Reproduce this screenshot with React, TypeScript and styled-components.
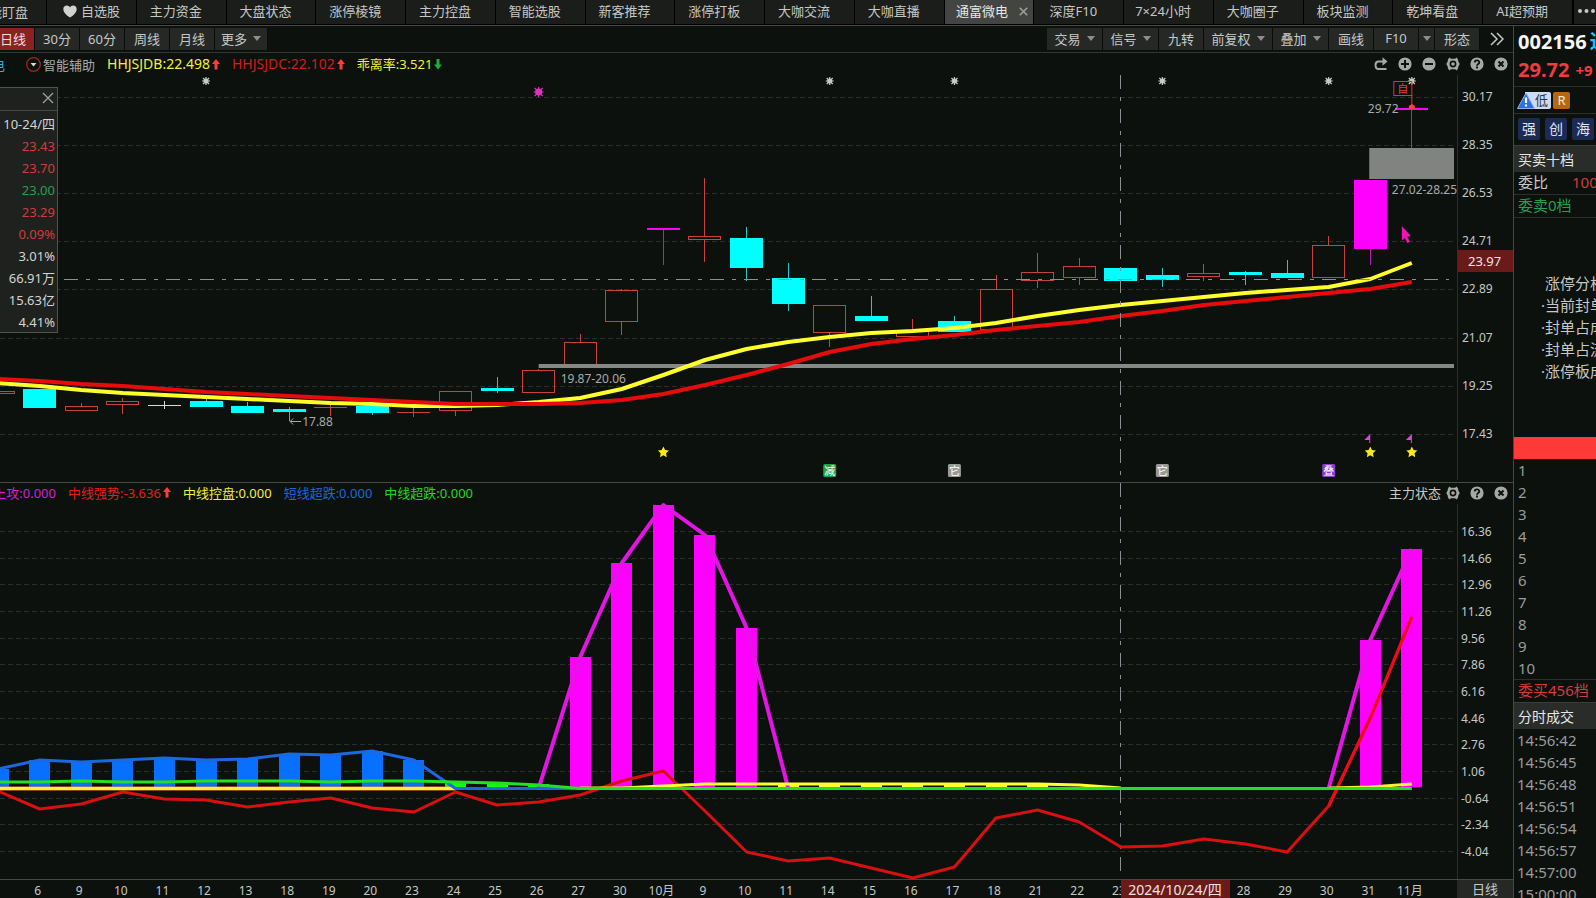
import React, { useEffect, useRef, useState } from "react";
import styled, { createGlobalStyle, css } from "styled-components";

const c = {
  bg: "#0c110e",
  panel: "#262826",
  line: "#474947",
  faint: "#2c2f2c",
  text: "#c6c8c6",
  bright: "#e6e8e6",
  dim: "#9a9c9a",
  red: "#d23c3c",
  green: "#23a04e",
  cyan: "#00ffff",
  magenta: "#ff00ff",
  yellow: "#ffff2e",
  tag: "#6b1a1a",
};

const FONT = '"Noto Sans", "Noto Sans CJK SC", sans-serif';

const GlobalStyle = createGlobalStyle`
  * { box-sizing: border-box; }
  html, body { margin: 0; background: ${c.bg}; overflow: hidden; }
  body { font-family: ${FONT}; font-size: 13px; color: ${c.text}; }
  button { font: inherit; color: inherit; background: none; border: 0; padding: 0; margin: 0; cursor: pointer; }
  svg { display: block; flex: none; }
`;

const Page = styled.div`
  display: flex;
  flex-direction: column;
  height: 100vh;
  overflow: hidden;
`;

/* ---------- tab bar ---------- */

const TabBar = styled.nav`
  display: flex;
  flex: none;
  height: 26px;
  padding-bottom: 1px;
  background: #000;
  border-bottom: 1px solid ${c.line};
`;

const TabItem = styled.div<{ $active?: boolean }>`
  display: flex;
  flex: 1 1 0;
  min-width: 0;
  border-right: 1px solid #000;
  background: ${(p) => (p.$active ? "#434543" : "#1b1d1b")};
  color: ${(p) => (p.$active ? c.bright : c.text)};
`;

const TabButton = styled.button<{ $wide?: boolean }>`
  display: flex;
  flex: 1;
  align-items: center;
  justify-content: center;
  gap: 4px;
  white-space: nowrap;
  line-height: 22px;
  padding: 0 ${(p) => (p.$wide ? 0 : 11)}px 2px 0;
`;

const EdgeTab = styled.button`
  display: flex;
  flex: none;
  justify-content: flex-end;
  align-items: center;
  width: 47px;
  padding: 0 18px 2px 0;
  overflow: hidden;
  white-space: nowrap;
  border-right: 1px solid #000;
  background: #1b1d1b;
`;

const TabClose = styled.button`
  display: flex;
  align-items: center;
  padding: 0 5px 2px 0;
  color: #a0a2a0;
`;

const MoreTabs = styled.button`
  display: flex;
  flex: none;
  align-items: center;
  justify-content: flex-end;
  width: 23px;
  padding-bottom: 3px;
  background: #1b1d1b;
  border-left: 1px solid #000;
`;

/* ---------- frame ---------- */

const Body = styled.div`
  display: flex;
  flex: 1;
  min-height: 0;
`;

const Main = styled.main`
  flex: 1;
  min-width: 0;
  position: relative;
`;

const Toolbar = styled.div`
  display: flex;
  align-items: center;
  height: 27px;
  border-bottom: 1px solid #343634;
  padding-right: 4px;
`;

const ToolButton = styled.button<{ $w?: number }>`
  display: flex;
  align-items: center;
  justify-content: center;
  gap: 6px;
  height: 22px;
  width: ${(p) => p.$w ?? 45}px;
  padding-bottom: 2px;
  border-right: 1px solid #0a0c0a;
  background: ${c.panel};
  color: ${c.text};
  white-space: nowrap;
`;

const CurrentPeriod = styled(ToolButton)`
  padding-right: 8px;
  background: #8a2222;
  color: #f0dede;
`;

const Spacer = styled.div`
  flex: 1;
`;

const IconButton = styled.button`
  display: flex;
  align-items: center;
  justify-content: center;
  width: 24px;
  height: 20px;
  color: #a6a8a6;
`;

const ExpandButton = styled(IconButton)`
  margin-left: 5px;
`;

const legendRow = css`
  display: flex;
  align-items: center;
  white-space: nowrap;
`;

const Legend = styled.div`
  ${legendRow}
  height: 22px;
`;

const OverlayLegend = styled.div`
  ${legendRow}
  position: absolute;
  top: 0;
  left: 0;
  right: 0;
  height: 19px;
`;

const ClippedName = styled.span<{ $w: number; $color: string }>`
  display: flex;
  flex: none;
  justify-content: flex-end;
  width: ${(p) => p.$w}px;
  overflow: hidden;
  color: ${(p) => p.$color};
`;

const Assist = styled.button`
  display: flex;
  align-items: center;
  gap: 2px;
  margin-left: 21px;
  color: #a8aaa8;
`;

const Series = styled.span<{ $color: string; $size?: number }>`
  display: flex;
  align-items: center;
  gap: 2px;
  margin-left: 12px;
  font-size: ${(p) => p.$size ?? 13}px;
  line-height: 18px;
  color: ${(p) => p.$color};
`;

const Pane = styled.section`
  position: relative;
  border-bottom: 1px solid ${c.line};
`;

const DateRow = styled.div`
  display: flex;
  height: 18px;
`;

const PeriodButton = styled.button`
  flex: none;
  width: 56px;
  height: 18px;
  line-height: 18px;
  background: ${c.panel};
`;

/* ---------- floating quote box ---------- */

const QuoteBox = styled.aside`
  position: absolute;
  top: 61px;
  left: 0;
  width: 58px;
  height: 246px;
  overflow: hidden;
  border: 1px solid #515351;
  border-left: 0;
  background: #1f211f;
`;

const QuoteHead = styled.div`
  display: flex;
  justify-content: flex-end;
  align-items: center;
  height: 23px;
  padding: 0 3px 2px 0;
  border-bottom: 1px solid #454745;
`;

const QuoteList = styled.ul`
  list-style: none;
  margin: 0;
  padding: 2px 2px 0 0;
`;

const QuoteItem = styled.li<{ $color?: string }>`
  display: flex;
  justify-content: flex-end;
  height: 22px;
  line-height: 22px;
  font-size: 13px;
  white-space: nowrap;
  color: ${(p) => p.$color ?? "#d4d6d4"};
`;

/* ---------- side bar ---------- */

const Side = styled.aside`
  flex: none;
  width: 83px;
  overflow: hidden;
  border-left: 1px solid ${c.line};
  white-space: nowrap;
  font-size: 15px;
`;

const StockHead = styled.header`
  height: 61px;
  padding: 2px 0 0 4px;
  font-size: 20px;
  font-weight: 700;
  line-height: 28px;
  border-bottom: 1px solid ${c.faint};
`;

const Code = styled.div`
  display: flex;
  gap: 3px;
  color: #f4f6f4;
  span { color: #1fc4f0; }
`;

const Price = styled.div`
  display: flex;
  gap: 6px;
  color: #f03c3c;
  span { font-size: 15px; }
`;

const BadgeRow = styled.div`
  display: flex;
  align-items: center;
  gap: 2px;
  height: 27px;
  padding-left: 3px;
  border-bottom: 1px solid ${c.faint};
`;

const RiskBadge = styled.span`
  display: flex;
  align-items: center;
  width: 34px;
  height: 17px;
  border-radius: 2px;
  background: linear-gradient(90deg, transparent 8px, #cddcf5 8px);
  color: #30343a;
  font-size: 13px;
  line-height: 17px;
`;

const RBadge = styled.span`
  width: 17px;
  height: 17px;
  border-radius: 2px;
  background: #b4690e;
  color: #f4e8d8;
  font-size: 13px;
  line-height: 17px;
  text-align: center;
`;

const TagRow = styled.div`
  display: flex;
  align-items: center;
  gap: 5px;
  height: 31px;
  padding: 0 0 1px 4px;
`;

const TagButton = styled.button`
  flex: none;
  width: 22px;
  height: 22px;
  border-radius: 2px;
  background: #1c2b56;
  color: #e0e4ee;
  font-size: 14px;
  line-height: 20px;
`;

const SideHeading = styled.h2`
  margin: 0;
  height: 27px;
  padding: 2px 0 0 4px;
  background: #2a2c2a;
  border-top: 1px solid #3c3e3c;
  color: ${c.bright};
  font-size: 14px;
  font-weight: 400;
  line-height: 24px;
`;

const SideRow = styled.div<{ $color?: string }>`
  display: flex;
  gap: 24px;
  height: 23px;
  padding-left: 4px;
  line-height: 20px;
  border-bottom: 1px solid ${c.faint};
  color: ${(p) => p.$color ?? c.text};
`;

const Red = styled.span`
  color: ${c.red};
`;

const Analysis = styled.ul`
  list-style: none;
  margin: 0;
  height: 219px;
  padding: 54px 0 0 27px;
  li { height: 22px; line-height: 22px; }
  li:first-child { padding-left: 4px; }
`;

const RedBar = styled.div`
  height: 22px;
  background: #ff3838;
`;

const Lines = styled.ol`
  list-style: none;
  margin: 0;
  padding: 0 0 0 4px;
  color: ${c.dim};
  li { height: 22px; line-height: 22px; }
`;

const BuyRow = styled(SideRow)`
  border-top: 1px solid ${c.faint};
  border-bottom: 0;
`;

const Times = styled(Lines)`
  padding-left: 3px;
`;

/* ---------- icons ---------- */

const Caret = () => (
  <svg width="8" height="5" viewBox="0 0 8 5"><path d="M0 0h8L4 5z" fill="#8c8e8c" /></svg>
);
const Cross = ({ size, w = 1.3 }: { size: number; w?: number }) => (
  <svg width={size} height={size} viewBox="0 0 12 12"><path d="M1 1l10 10M11 1L1 11" stroke="#a0a2a0" strokeWidth={w} fill="none" /></svg>
);
const Heart = () => (
  <svg width="14" height="13" viewBox="0 0 14 13"><path d="M7 12.5C3 10 0.3 7.3 0.3 4.2 0.3 2 1.9 0.6 3.8 0.6 5.2 0.6 6.3 1.3 7 2.5 7.7 1.3 8.8 0.6 10.2 0.6 12.1 0.6 13.7 2 13.7 4.2 13.7 7.3 11 10 7 12.5z" fill="#d0d2d0" /></svg>
);
const Disc = ({ children }: { children: React.ReactNode }) => (
  <svg width="14" height="14" viewBox="0 0 14 14">
    <circle cx="7" cy="7" r="6.6" fill="#a6a8a6" />
    <g stroke={c.bg} strokeWidth="2" fill="none">{children}</g>
  </svg>
);
const PlusIcon = () => <Disc><path d="M7 3v8M3 7h8" /></Disc>;
const MinusIcon = () => <Disc><path d="M3 7h8" /></Disc>;
const CloseIcon = () => <Disc><path d="M4.5 4.5l5 5M9.5 4.5l-5 5" /></Disc>;
const HelpIcon = () => (
  <Disc>
    <path d="M4.7 5.6C4.7 2.7 9.3 2.7 9.3 5.4 9.3 7 7 6.9 7 8.7" strokeWidth="1.8" />
    <path d="M7 9.6v1.9" strokeWidth="1.9" />
  </Disc>
);
const GearIcon = () => (
  <svg width="14" height="14" viewBox="0 0 14 14">
    <path fill="#a6a8a6" fillRule="evenodd" d="M3.2.4L5 1.700H9L10.800.4 12.200 3V4.300L13.700 7 12.200 9.700V11L10.800 13.600 9 12.300H5L3.200 13.600 1.800 11V9.700L.3 7 1.800 4.300V3zM7 3.600a3.400 3.400 0 100 6.800 3.400 3.400 0 000-6.800zM7 5.200a1.800 1.800 0 110 3.600 1.800 1.800 0 010-3.600z" />
  </svg>
);
const RedoIcon = () => (
  <svg width="14" height="14" viewBox="0 0 14 14">
    <path d="M10 4.500H4.500Q1.500 4.500 1.500 8 1.500 12 4.500 12H12.500" fill="none" stroke="#a6a8a6" strokeWidth="2" />
    <path d="M8.500 0.300l5 4.200-5 4.200z" fill="#a6a8a6" />
  </svg>
);
const UpArrow = () => (
  <svg width="8" height="11" viewBox="0 0 8 11"><path d="M4 0L8 5H5.500v5.500h-3V5H0z" fill="#ff3c3c" /></svg>
);
const DownArrow = () => (
  <svg width="8" height="11" viewBox="0 0 8 11"><path d="M4 10.500L8 5.500H5.500V0h-3v5.500H0z" fill="#1fae3c" /></svg>
);
const AssistIcon = () => (
  <svg width="15" height="15" viewBox="0 0 15 15">
    <circle cx="7.5" cy="7.5" r="6.8" fill="none" stroke="#9c2424" strokeWidth="1.3" />
    <path d="M4.500 6h6l-3 3.500z" fill="#d8dad8" />
  </svg>
);
const Chevrons = () => (
  <svg width="14" height="14" viewBox="0 0 14 14"><path d="M1 1l6 6-6 6M7 1l6 6-6 6" fill="none" stroke="#c6c8c6" strokeWidth="1.5" /></svg>
);
const Dots = () => (
  <svg width="19" height="6" viewBox="0 0 19 6"><g fill="#c6c8c6"><circle cx="3" cy="3" r="2" /><circle cx="9.5" cy="3" r="2" /><circle cx="16" cy="3" r="2" /></g></svg>
);
const WarnIcon = () => (
  <svg width="18" height="17" viewBox="0 0 18 17">
    <path d="M9 1L17.500 16.500H.5z" fill="#2f6fe0" stroke="#8db4f4" />
    <path d="M9 5.500v5.500M9 12.500v2" stroke="#fff" strokeWidth="2.2" />
  </svg>
);

/* ---------- chart data ---------- */

type Kind = "up" | "down" | "limit" | "flat";
// slot, kind, body top, body bottom, wick top, wick bottom
type Candle = [number, Kind, number, number, number, number];

const candles: Candle[] = [
  [-1, "up", 391, 394, 391, 394],
  [0, "down", 389, 408, 389, 408],
  [1, "up", 406, 411, 403, 411],
  [2, "up", 401, 405, 398, 414],
  [3, "flat", 405, 405, 401, 409],
  [4, "down", 401, 407, 398, 407],
  [5, "down", 406, 413, 402, 413],
  [6, "down", 409, 412, 407, 421],
  [7, "up", 407, 407, 404, 416],
  [8, "down", 406, 413, 406, 415],
  [9, "up", 412, 412, 407, 417],
  [10, "up", 391, 411, 391, 416],
  [11, "down", 388, 391, 377, 393],
  [12, "up", 370, 393, 369, 393],
  [13, "up", 342, 365, 334, 365],
  [14, "up", 290, 322, 289, 335],
  [15, "limit", 228, 230, 228, 265],
  [16, "up", 236, 240, 178, 262],
  [17, "down", 238, 268, 227, 281],
  [18, "down", 278, 304, 263, 311],
  [19, "up", 305, 333, 305, 347],
  [20, "down", 316, 321, 296, 321],
  [21, "up", 330, 337, 319, 337],
  [22, "down", 321, 332, 316, 332],
  [23, "up", 289, 330, 275, 330],
  [24, "up", 272, 281, 253, 288],
  [25, "up", 266, 278, 258, 285],
  [26, "down", 268, 281, 267, 281],
  [27, "down", 275, 280, 268, 287],
  [28, "up", 273, 277, 264, 281],
  [29, "down", 272, 275, 271, 285],
  [30, "down", 273, 278, 260, 278],
  [31, "up", 245, 278, 236, 278],
  [32, "limit", 180, 249, 180, 265],
  [33, "limit", 108, 110, 108, 148],
];

// Each series starts one slot before the first fully visible day.
const fastLine = [383, 386, 390, 393, 395, 397, 399, 401, 403, 404, 406, 406, 405, 402, 398, 389, 375, 360, 349, 342, 337, 333, 331, 328, 323, 316, 310, 305, 301, 297, 293, 290, 287, 279, 263];
const slowLine = [379, 381, 384, 386, 389, 392, 394, 396, 398, 400, 402, 404, 404, 404, 403, 400, 394, 385, 375, 364, 352, 344, 339, 335, 330, 326, 322, 316, 311, 305, 301, 297, 293, 289, 282];
const strength = [791, 809, 804, 792, 799, 800, 807, 802, 798, 808, 812, 792, 805, 802, 795, 781, 771, 811, 852, 861, 858, 868, 878, 867, 818, 810, 822, 847, 846, 839, 844, 852, 806, 718, 617];
const shortDip = [769, 760, 762, 760, 758, 760, 759, 754, 755, 751, 760];
const midDip = [782, 782, 781, 782, 782, 781, 781, 781, 782, 781, 781, 782, 783, 785];
const attackBars: [number, number][] = [[13, 657], [14, 563], [15, 505], [16, 535], [17, 628], [32, 640], [33, 549]];

const priceTicks = ["30.17", "28.35", "26.53", "24.71", "22.89", "21.07", "19.25", "17.43"];
const stateTicks = ["16.36", "14.66", "12.96", "11.26", "9.56", "7.86", "6.16", "4.46", "2.76", "1.06", "-0.64", "-2.34", "-4.04"];
const dates = ["6", "9", "10", "11", "12", "13", "18", "19", "20", "23", "24", "25", "26", "27", "30", "10月", "9", "10", "11", "14", "15", "16", "17", "18", "21", "22", "23", "", "", "28", "29", "30", "31", "11月"];

const AXIS = 56;
const ZERO = 788;
const CURSOR_SLOT = 26;

type Scale = { width: number; plot: number; x: (i: number) => number };
const makeScale = (width: number): Scale => {
  const plot = width - AXIS;
  return { width, plot, x: (i) => ((39.7 + i * 41.58) / 1457) * plot };
};
const path = (s: Scale, ys: number[], from = -1) =>
  ys.map((y, k) => `${s.x(from + k).toFixed(1)},${y}`).join(" ");

const Burst = ({ x, y, color, r = 4 }: { x: number; y: number; color: string; r?: number }) => (
  <g transform={`translate(${x} ${y})`} stroke={color} strokeWidth="1.2">
    <circle r={r - 1.5} fill={color} stroke="none" />
    <path d={`M${-r} 0H${r}M0 ${-r}V${r}M${1 - r} ${1 - r}L${r - 1} ${r - 1}M${r - 1} ${1 - r}L${1 - r} ${r - 1}`} />
  </g>
);
const Star = ({ x, y }: { x: number; y: number }) => (
  <path transform={`translate(${x} ${y})`} fill="#ffe81a" d="M0-5.500L1.700-1.900 5.500-1.400 2.700 1.300 3.400 5.200 0 3.300-3.400 5.200-2.700 1.300-5.500-1.400-1.700-1.900z" />
);
const Stamp = ({ x, color, label }: { x: number; color: string; label: string }) => (
  <g>
    <rect x={x - 6.5} y="464" width="13" height="13" rx="1.5" fill={color} />
    <text x={x} y="474.5" fontSize="11" fill="#fff" textAnchor="middle">{label}</text>
  </g>
);

const Grid = ({ s, ys }: { s: Scale; ys: number[] }) => (
  <g stroke="#2b2e2b" strokeDasharray="5 3" shapeRendering="crispEdges">
    {ys.map((y) => <line key={y} x1="0" x2={s.plot - 4} y1={y} y2={y} />)}
  </g>
);

const CandleMark = ({ s, data }: { s: Scale; data: Candle }) => {
  const [i, kind, top, bottom, high, low] = data;
  const x = Math.floor(s.x(i));
  const color = { up: "#c8433c", down: c.cyan, limit: c.magenta, flat: "#d8dad8" }[kind];
  const hollow = kind === "up" && bottom > top;
  const wick = kind === "down" ? "#2cc8c0" : kind === "limit" ? "#b41eb4" : color;
  return (
    <g shapeRendering="crispEdges">
      {high < top && <rect x={x} y={high} width="1" height={top - high} fill={wick} />}
      {low > bottom && <rect x={x} y={bottom} width="1" height={low - bottom} fill={wick} />}
      {hollow
        ? <rect x={x - 15.5} y={top + 0.5} width="32" height={bottom - top - 1} fill="none" stroke={color} />
        : <rect x={x - 16} y={top} width="33" height={Math.max(1, bottom - top)} fill={color} />}
    </g>
  );
};

const PriceChart = ({ s }: { s: Scale }) => {
  const ys = priceTicks.map((_, k) => 97.5 + Math.round(k * 48.1));
  const cx = Math.floor(s.x(CURSOR_SLOT)) + 0.5;
  const last = s.x(33);
  return (
    <svg width={s.width} height="407" viewBox={`0 75 ${s.width} 407`} fontFamily={FONT} role="img" aria-label="日线">
      <Grid s={s} ys={ys} />
      <line x1={s.plot + 0.5} x2={s.plot + 0.5} y1="75" y2="480" stroke="#2c2f2c" />
      {candles.map((k) => <CandleMark key={k[0]} s={s} data={k} />)}
      <rect x={s.x(12)} y="364" width={s.plot - 3 - s.x(12)} height="4" fill="#858885" />
      <rect x={s.x(32) - 1} y="148" width={s.plot - 2 - s.x(32)} height="31" fill="#808380" />
      <g fill="none" strokeWidth="4" strokeLinejoin="round">
        <polyline points={path(s, fastLine)} stroke={c.yellow} />
        <polyline points={path(s, slowLine)} stroke="#e60c0c" />
      </g>
      <g stroke="#8c8e92" strokeDasharray="14 8 4 8" shapeRendering="crispEdges">
        <line x1="64" x2={s.plot - 8} y1="279.5" y2="279.5" />
        <line x1={cx} x2={cx} y1="75" y2="482" />
      </g>
      {[4, 19, 22, 27, 31, 33].map((i) => <Burst key={i} x={s.x(i)} y={81} color="#c8cac8" />)}
      <Burst x={s.x(12)} y={92} color="#e030c0" r={5} />
      {[15, 32, 33].map((i) => <Star key={i} x={s.x(i)} y={452} />)}
      {[32, 33].map((i) => (
        <path key={i} d={`M${s.x(i) - 6} 440l6-6v9h-1v-3z`} fill="#e640e6" />
      ))}
      <Stamp x={s.x(19)} color="#1f9e4c" label="减" />
      <Stamp x={s.x(22)} color="#989a98" label="它" />
      <Stamp x={s.x(27)} color="#989a98" label="它" />
      <Stamp x={s.x(31)} color="#8a3fc8" label="叠" />
      <g fill="#a8aaa8" fontSize="12">
        <text x={s.x(12) + 22} y="383">19.87-20.06</text>
        <text x={s.x(6) + 13} y="426">17.88</text>
        <path d={`M${s.x(6) + 12} 421.500h-11m3-3l-3 3 3 3`} stroke="#a8aaa8" fill="none" />
        <text x={last - 44} y="113">29.72</text>
        <text x={last - 20} y="194">27.02-28.25</text>
      </g>
      <g stroke="#d83830" fill="none">
        <rect x={last - 18} y="81.5" width="18" height="14" />
        <line x1={last} x2={last} y1="95" y2="108" />
        <path d={`M${last - 3} 109v-3l3-2 3 2v3z`} fill="#ff3c48" stroke="none" />
      </g>
      <text x={last - 9} y="93" fontSize="11" fill="#e04038" textAnchor="middle">自</text>
      <path transform={`translate(${last - 10} 226)`} fill="#f014b4" d="M0 0l9 10-3.500.8 2.500 5-2.600 1.200-2.400-5L0 14.500z" />
      <g fill={c.text} fontSize="12">
        {priceTicks.map((t, k) => <text key={t} x={s.plot + 5} y={ys[k] + 3.5}>{t}</text>)}
      </g>
      <rect x={s.plot + 1} y="250" width={AXIS} height="22" fill={c.tag} />
      <text x={s.plot + 11} y="266" fontSize="13" fill="#f0e4e4">23.97</text>
    </svg>
  );
};

const StateChart = ({ s }: { s: Scale }) => {
  const ys = stateTicks.map((_, k) => 531.5 + Math.round(k * 26.67));
  const cx = Math.floor(s.x(CURSOR_SLOT)) + 0.5;
  const bar = (i: number, top: number, fill: string, bottom = ZERO - 1) => (
    <rect key={`${fill}${i}`} x={Math.floor(s.x(i)) - 10} y={top} width="21" height={bottom - top} fill={fill} shapeRendering="crispEdges" />
  );
  const upper = Array.from({ length: 9 }, () => 784);
  return (
    <svg width={s.width} height="396" viewBox={`0 483 ${s.width} 396`} fontFamily={FONT} role="img" aria-label="主力状态">
      <Grid s={s} ys={ys} />
      <line x1={s.plot + 0.5} x2={s.plot + 0.5} y1="504" y2="879" stroke="#2c2f2c" />
      <line x1={cx} x2={cx} y1="483" y2="879" stroke="#8c8e92" strokeDasharray="14 8 4 8" shapeRendering="crispEdges" />
      {shortDip.map((y, k) => bar(k - 1, y, "#0870ff"))}
      {attackBars.map(([i, y]) => bar(i, y, c.magenta))}
      {[10, 11, 12].map((i) => bar(i, 782 + (i - 10), "#0cff0c"))}
      {[18, 19, 20, 21, 22, 23, 24].map((i) => bar(i, 784, c.yellow))}
      <g fill="none" strokeWidth="3" strokeLinejoin="round">
        <polyline points={path(s, [ZERO, 657, 563, 505, 535, 628, ZERO], 12)} stroke="#e414e4" strokeWidth="4" />
        <polyline points={path(s, [ZERO, 640, 549], 31)} stroke="#e414e4" strokeWidth="4" />
        <polyline points={path(s, strength)} stroke="#d81010" />
        <polyline points={path(s, strength.slice(-3), 31)} stroke="#ec0c1c" />
        <line x1="0" x2={s.x(10)} y1="788.5" y2="788.5" stroke="#f08030" strokeWidth="4" />
        <line x1="0" x2={s.x(10)} y1="788.5" y2="788.5" stroke="#ffee3c" />
        <polyline points={path(s, [...shortDip, ZERO + 0.5, ZERO + 0.5, ZERO + 0.5, ZERO + 0.5])} stroke="#1c68e0" />
        <polyline points={path(s, [ZERO, ZERO, 786, ...upper, 785, ZERO], 13)} stroke={c.yellow} />
        <polyline points={path(s, [ZERO, 787, 784], 31)} stroke="#f4f040" />
        <polyline points={`${path(s, midDip)} ${s.x(13)},788.5 ${s.x(33)},788.5`} stroke="#22e022" />
      </g>
      <g fill={c.text} fontSize="12">
        {stateTicks.map((t, k) => <text key={t} x={s.plot + 4} y={ys[k] + 4}>{t}</text>)}
      </g>
    </svg>
  );
};

const DateAxis = ({ s }: { s: Scale }) => {
  const cx = Math.floor(s.x(CURSOR_SLOT));
  return (
    <svg width={s.plot} height="18" viewBox={`0 0 ${s.plot} 18`} fontFamily={FONT} fontSize="12" fill={c.text}>
      {dates.map((d, i) => <text key={i} x={s.x(i) - 2} y="15" textAnchor="middle">{d}</text>)}
      <rect x={cx + 1} y="0" width="109" height="18" fill={c.tag} />
      <text x={cx + 55} y="15" fontSize="14" fill="#f0e4e4" textAnchor="middle">2024/10/24/四</text>
    </svg>
  );
};

/* ---------- page ---------- */

const tabs = ["自选股", "主力资金", "大盘状态", "涨停棱镜", "主力控盘", "智能选股", "新客推荐", "涨停打板", "大咖交流", "大咖直播", "通富微电", "深度F10", "7×24小时", "大咖圈子", "板块监测", "乾坤看盘", "AI超预期"];
const quote: [string, string?][] = [
  ["10-24/四"], ["23.43", c.red], ["23.70", c.red], ["23.00", c.green], ["23.29", c.red],
  ["0.09%", c.red], ["3.01%"], ["66.91万"], ["15.63亿"], ["4.41%"],
];
const times = ["14:56:42", "14:56:45", "14:56:48", "14:56:51", "14:56:54", "14:56:57", "14:57:00", "15:00:00"];

export default function App() {
  const ref = useRef<HTMLElement>(null);
  const [width, setWidth] = useState(1513);
  useEffect(() => {
    const el = ref.current;
    if (!el) return;
    const update = () => setWidth(el.clientWidth);
    update();
    const ro = new ResizeObserver(update);
    ro.observe(el);
    return () => ro.disconnect();
  }, []);
  const s = makeScale(width);

  return (
    <Page>
      <GlobalStyle />
      <TabBar>
        <EdgeTab>能盯盘</EdgeTab>
        {tabs.map((t) => {
          const active = t === "通富微电";
          const starred = t === "自选股";
          return (
            <TabItem key={t} $active={active}>
              <TabButton $wide={active || starred}>{starred && <Heart />}{t}</TabButton>
              {active && <TabClose aria-label="关闭"><Cross size={9} w={2} /></TabClose>}
            </TabItem>
          );
        })}
        <MoreTabs aria-label="更多标签"><Dots /></MoreTabs>
      </TabBar>
      <Body>
        <Main ref={ref}>
          <Toolbar>
            <CurrentPeriod $w={35}>日线</CurrentPeriod>
            <ToolButton>30分</ToolButton>
            <ToolButton>60分</ToolButton>
            <ToolButton>周线</ToolButton>
            <ToolButton>月线</ToolButton>
            <ToolButton $w={53}>更多<Caret /></ToolButton>
            <Spacer />
            <ToolButton $w={56}>交易<Caret /></ToolButton>
            <ToolButton $w={56}>信号<Caret /></ToolButton>
            <ToolButton>九转</ToolButton>
            <ToolButton $w={69}>前复权<Caret /></ToolButton>
            <ToolButton $w={56}>叠加<Caret /></ToolButton>
            <ToolButton>画线</ToolButton>
            <ToolButton>F10</ToolButton>
            <ToolButton $w={16} aria-label="F10 选项"><Caret /></ToolButton>
            <ToolButton>形态</ToolButton>
            <ExpandButton aria-label="展开"><Chevrons /></ExpandButton>
          </Toolbar>
          <Legend>
            <ClippedName $w={5} $color="#2ab4d8">电</ClippedName>
            <Assist><AssistIcon />智能辅助</Assist>
            <Series $color="#f0f03c" $size={14}>HHJSJDB:22.498<UpArrow /></Series>
            <Series $color="#d01c1c" $size={14}>HHJSJDC:22.102<UpArrow /></Series>
            <Series $color="#f0f03c">乖离率:3.521<DownArrow /></Series>
            <Spacer />
            <IconButton aria-label="还原"><RedoIcon /></IconButton>
            <IconButton aria-label="放大"><PlusIcon /></IconButton>
            <IconButton aria-label="缩小"><MinusIcon /></IconButton>
            <IconButton aria-label="设置"><GearIcon /></IconButton>
            <IconButton aria-label="帮助"><HelpIcon /></IconButton>
            <IconButton aria-label="关闭"><CloseIcon /></IconButton>
          </Legend>
          <Pane><PriceChart s={s} /></Pane>
          <Pane>
            <StateChart s={s} />
            <OverlayLegend>
              <ClippedName $w={56} $color="#d020d0">上攻:0.000</ClippedName>
              <Series $color="#e02020">中线强势:-3.636<UpArrow /></Series>
              <Series $color="#f0f03c">中线控盘:0.000</Series>
              <Series $color="#1c68d8">短线超跌:0.000</Series>
              <Series $color="#22d822">中线超跌:0.000</Series>
              <Spacer />
              主力状态
              <IconButton aria-label="设置"><GearIcon /></IconButton>
              <IconButton aria-label="帮助"><HelpIcon /></IconButton>
              <IconButton aria-label="关闭"><CloseIcon /></IconButton>
            </OverlayLegend>
          </Pane>
          <DateRow>
            <DateAxis s={s} />
            <PeriodButton>日线</PeriodButton>
          </DateRow>
          <QuoteBox>
            <QuoteHead><button aria-label="关闭"><Cross size={12} /></button></QuoteHead>
            <QuoteList>
              {quote.map(([v, color]) => <QuoteItem key={v} $color={color}>{v}</QuoteItem>)}
            </QuoteList>
          </QuoteBox>
        </Main>
        <Side>
          <StockHead>
            <Code>002156<span>通</span></Code>
            <Price>29.72<span>+9</span></Price>
          </StockHead>
          <BadgeRow><RiskBadge><WarnIcon />低</RiskBadge><RBadge>R</RBadge></BadgeRow>
          <TagRow><TagButton>强</TagButton><TagButton>创</TagButton><TagButton>海</TagButton></TagRow>
          <SideHeading>买卖十档</SideHeading>
          <SideRow>委比<Red>100</Red></SideRow>
          <SideRow $color={c.green}>委卖0档</SideRow>
          <Analysis>
            <li>涨停分析</li>
            <li>·当前封单</li>
            <li>·封单占成</li>
            <li>·封单占流</li>
            <li>·涨停板成</li>
          </Analysis>
          <RedBar />
          <Lines>{Array.from({ length: 10 }, (_, k) => <li key={k}>{k + 1}</li>)}</Lines>
          <BuyRow $color={c.red}>委买456档</BuyRow>
          <SideHeading>分时成交</SideHeading>
          <Times>{times.map((t) => <li key={t}>{t}</li>)}</Times>
        </Side>
      </Body>
    </Page>
  );
}
